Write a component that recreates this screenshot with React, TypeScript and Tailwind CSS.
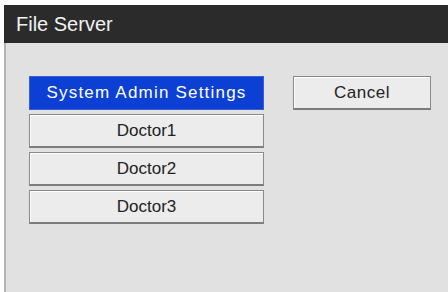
const doctors = ["Doctor1", "Doctor2", "Doctor3"];

export default function App() {
  return (
    <div
      className="w-[448px] h-[292px] bg-white pt-[5px] pl-[4px] flex flex-col overflow-hidden"
      style={{ fontFamily: '"Liberation Sans", Arial, sans-serif' }}
    >
      {/* Title bar */}
      <div className="h-[38px] flex-shrink-0 bg-[#2b2b2b] flex items-center pl-[12px] text-[20px] text-[#f2f2f2]">
        File Server
      </div>

      {/* Body */}
      <div className="flex-1 bg-[#e1e1e1] border-l-2 border-[#b4b4b4] pt-[33px] pl-[23px] flex gap-[29px] items-start">
        <div className="w-[235px] flex flex-col gap-[4px]">
          <button className="h-[34px] bg-[#0c3fd4] border border-[#3a5fd0] text-white text-[17px] tracking-[1.2px]">
            System Admin Settings
          </button>
          {doctors.map((name) => (
            <button
              key={name}
              className="h-[34px] bg-[#ececec] border border-[#8a8a8a] border-b-2 border-b-[#7c7c7c] shadow-[inset_1px_1px_0_#ffffff] text-[#222] text-[17px]"
            >
              {name}
            </button>
          ))}
        </div>
        <button className="w-[138px] h-[34px] bg-[#ececec] border border-[#8a8a8a] border-b-2 border-b-[#7c7c7c] shadow-[inset_1px_1px_0_#ffffff] text-[#222] text-[17px] tracking-[0.5px]">
          Cancel
        </button>
      </div>
    </div>
  );
}
